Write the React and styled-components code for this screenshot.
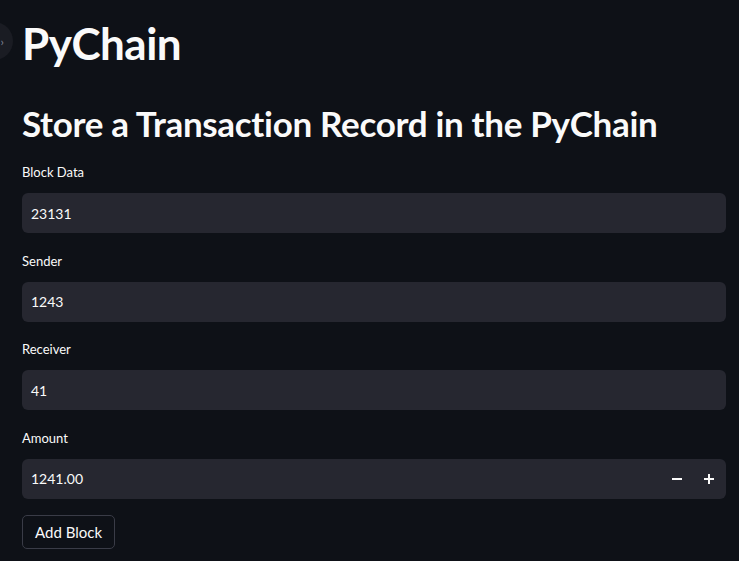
import React from "react";
import styled, { createGlobalStyle } from "styled-components";

const Global = createGlobalStyle`
  html, body { margin: 0; padding: 0; background: #0e1117; }
  body { font-family: Lato, "Noto Sans", sans-serif; color: #fafafa; }
  * { box-sizing: border-box; }
`;

const Page = styled.div`
  position: relative;
  min-height: 561px;
  background: #0e1117;
  padding: 15px 13px 0 22px;
  overflow: hidden;
`;

const SideToggle = styled.div`
  position: absolute;
  left: -25px;
  top: 22px;
  width: 38px;
  height: 38px;
  border-radius: 50%;
  background: #1a1c23;
  display: flex;
  align-items: center;
  justify-content: flex-end;
  padding-right: 9px;
  color: #808495;
  font-size: 12px;
`;

const Title = styled.h1`
  margin: 0;
  font-size: 44px;
  font-weight: 700;
  line-height: 56px;
  letter-spacing: -0.5px;
`;

const Subtitle = styled.h2`
  margin: 30px 0 0 0;
  font-size: 35px;
  font-weight: 700;
  line-height: 44px;
  letter-spacing: -0.32px;
`;

const Form = styled.div`
  margin-top: 17px;
  display: flex;
  flex-direction: column;
`;

const Field = styled.div`
  display: flex;
  flex-direction: column;
  margin-bottom: 17.67px;
`;

const Label = styled.label`
  font-size: 13px;
  line-height: 20px;
  height: 20px;
  margin-bottom: 11px;
  color: #fafafa;
`;

const InputBox = styled.div`
  height: 40px;
  background: #262730;
  border-radius: 6px;
  display: flex;
  align-items: center;
  padding: 0 1px 0 9px;
  font-size: 14px;
  color: #fafafa;
`;

const Value = styled.span`
  flex: 1;
`;

const Step = styled.span`
  width: 32px;
  display: flex;
  justify-content: center;
  align-items: center;
`;

const Button = styled.button`
  align-self: flex-start;
  margin-top: -2px;
  height: 34px;
  padding: 0 12px;
  background: #0e1117;
  border: 1px solid #3a3c47;
  border-radius: 5px;
  color: #fafafa;
  font-family: inherit;
  font-size: 15px;
`;

function TextField({ label, value, number }) {
  return (
    <Field>
      <Label>{label}</Label>
      <InputBox>
        <Value>{value}</Value>
        {number && (
          <>
            <Step>
              <svg width="10" height="10" viewBox="0 0 10 10"><rect x="0" y="4" width="10" height="2" fill="#fafafa" /></svg>
            </Step>
            <Step>
              <svg width="10" height="10" viewBox="0 0 10 10"><rect x="0" y="4" width="10" height="2" fill="#fafafa" /><rect x="4" y="0" width="2" height="10" fill="#fafafa" /></svg>
            </Step>
          </>
        )}
      </InputBox>
    </Field>
  );
}

export default function App() {
  return (
    <>
      <Global />
      <Page>
        <SideToggle>›</SideToggle>
        <Title>PyChain</Title>
        <Subtitle>Store a Transaction Record in the PyChain</Subtitle>
        <Form>
          <TextField label="Block Data" value="23131" />
          <TextField label="Sender" value="1243" />
          <TextField label="Receiver" value="41" />
          <TextField label="Amount" value="1241.00" number />
          <Button>Add Block</Button>
        </Form>
      </Page>
    </>
  );
}
